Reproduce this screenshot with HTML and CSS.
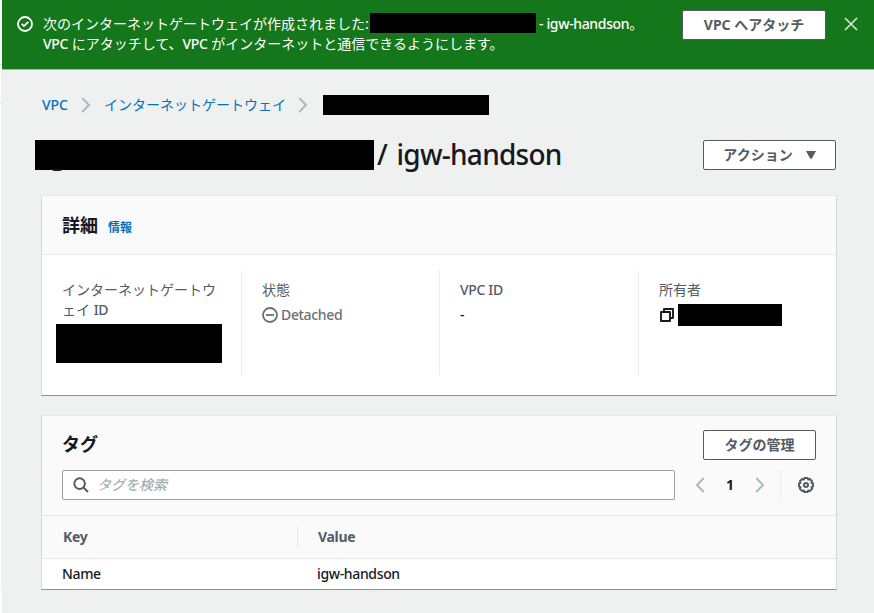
FILE: index.html
```html
<!DOCTYPE html>
<html lang="ja">
<head>
<meta charset="utf-8">
<title>igw-handson</title>
<link rel="stylesheet" href="styles.css">
</head>
<body>
<div class="app">
<aside class="rail"><i></i><i></i></aside>
<main class="main">
  <div class="flash">
    <svg class="flash-icon" width="16" height="16" viewBox="0 0 16 16" fill="none" stroke="currentColor" stroke-width="1.8"><circle cx="8" cy="8" r="7"/><path d="M4.7 7.8l2.3 2.3 4.3-4.2"/></svg>
    <div class="flash-text">
      <div class="line"><span class="msg1">次のインターネットゲートウェイが作成されました:</span><span class="mask mask-flash"></span><span class="latin">- igw-handson</span>。</div>
      <div class="line"><span><span class="latin">VPC</span> にアタッチして、<span class="latin">VPC</span> がインターネットと通信できるようにします。</span></div>
    </div>
    <button class="btn btn-attach">VPC へアタッチ</button>
    <svg class="close" width="16" height="16" viewBox="0 0 16 16" fill="none" stroke="currentColor" stroke-width="1.6"><path d="M2 2l12 12M14 2L2 14"/></svg>
  </div>
  <div class="content">
    <nav class="crumbs">
      <a class="vpc">VPC</a>
      <svg width="10" height="16" viewBox="0 0 10 16" fill="none" stroke="currentColor" stroke-width="1.9"><path d="M1.3 1.2L8 8l-6.7 6.8"/></svg>
      <a class="parent">インターネットゲートウェイ</a>
      <svg width="10" height="16" viewBox="0 0 10 16" fill="none" stroke="currentColor" stroke-width="1.9"><path d="M1.3 1.2L8 8l-6.7 6.8"/></svg>
      <span class="mask mask-crumb"></span>
    </nav>
    <header class="title">
      <span class="mask mask-title"></span>
      <h1>/ igw-handson</h1>
      <button class="btn btn-action">アクション<svg width="10" height="8" viewBox="0 0 10 8"><path d="M0 0h10L6 7.3Q5 8.5 4 7.3z" fill="currentColor"/></svg></button>
    </header>
    <section class="card details">
      <div class="card-head"><h2>詳細</h2><a class="info">情報</a></div>
      <div class="cols">
        <div class="col"><div class="label">インターネットゲートウェイ <span class="latin">ID</span></div><span class="mask mask-id"></span></div>
        <div class="col"><div class="label">状態</div>
          <div class="value status"><svg width="16" height="16" viewBox="0 0 16 16" fill="none" stroke="currentColor" stroke-width="1.8"><circle cx="8" cy="8" r="7"/><path d="M4 8h8"/></svg><span class="latin">Detached</span></div></div>
        <div class="col"><div class="label"><span class="latin">VPC ID</span></div><div class="value"><span class="latin">-</span></div></div>
        <div class="col"><div class="label">所有者</div>
          <div class="value owner"><svg width="16" height="16" viewBox="0 0 16 16" fill="none" stroke="currentColor" stroke-width="1.9" stroke-linejoin="round"><path d="M2 5h9v9H2z"/><path d="M5 5V2h9v9h-3"/></svg><span class="mask mask-owner"></span></div></div>
      </div>
    </section>
    <section class="card tags">
      <div class="tags-head"><h2>タグ</h2><button class="btn btn-tags">タグの管理</button></div>
      <div class="tools">
        <div class="search"><svg width="16" height="16" viewBox="0 0 16 16" fill="none" stroke="currentColor" stroke-width="2"><circle cx="6.6" cy="6.6" r="5.3"/><path d="M10.4 10.4L15 15"/></svg><span>タグを検索</span></div>
        <svg class="chev" width="10" height="16" viewBox="0 0 10 16" fill="none" stroke="currentColor" stroke-width="1.9"><path d="M8.7 1L2 8l6.7 7"/></svg>
        <b>1</b>
        <svg class="chev" width="10" height="16" viewBox="0 0 10 16" fill="none" stroke="currentColor" stroke-width="1.9"><path d="M1.3 1L8 8l-6.7 7"/></svg>
        <div class="gear"><svg width="16" height="16" viewBox="0 0 16 16" fill="none" stroke="currentColor" stroke-width="2" stroke-linejoin="round"><path d="M6.5 1H9.5L10.2 2.5L11.8 1.9L14.1 4.2L13.5 5.8L15 6.5V9.5L13.5 10.2L14.1 11.8L11.8 14.1L10.2 13.5L9.5 15H6.5L5.8 13.5L4.2 14.1L1.9 11.8L2.5 10.2L1 9.5V6.5L2.5 5.8L1.9 4.2L4.2 1.9L5.8 2.5z"/><circle cx="8" cy="8" r="2"/></svg></div>
      </div>
      <div class="row th"><span>Key</span><span>Value</span></div>
      <div class="row td"><span>Name</span><span>igw-handson</span></div>
    </section>
  </div>
</main>
</div>
</body>
</html>
```
FILE: styles.css
```css
* { box-sizing: border-box; }
body {
  margin: 0;
  background: #fff;
  color: #16191f;
  font: 400 14px/20px "Noto Sans", "Noto Sans CJK JP", sans-serif;
}
svg { display: block; flex: none; }
h1, h2 { margin: 0; }
.app { display: flex; height: 613px; overflow: hidden; }
.rail { width: 2px; padding-top: 64px; }
.rail i { display: block; height: 1px; margin-bottom: 38px; background: #d5dbdb; }
.main { flex: 1; min-width: 0; background: #eff1f1; }
.mask { display: block; flex: none; background: #000; }
.latin { font-weight: 500; letter-spacing: -.35px; }

.flash {
  display: flex;
  align-items: flex-start;
  height: 70px;
  padding: 10px 15px 0;
  border-bottom: 1px solid #a9b3b5;
  background: #15771b;
  color: #fff;
}
.flash-icon { margin-top: 6px; }
.flash-text { flex: 1; padding: 4px 0 0 10px; }
.line { display: flex; height: 20px; white-space: nowrap; align-items: center; }
.msg1 { width: 325px; }
.mask-flash { width: 166px; height: 20px; margin: -2px 3px 0 2px; }
.btn {
  display: flex;
  align-items: center;
  justify-content: center;
  height: 30px;
  padding: 0 0 1px;
  border: 1px solid #545b64;
  border-radius: 2px;
  background: #fff;
  color: #545b64;
  font: bold 14px/20px "Noto Sans", "Noto Sans CJK JP", sans-serif;
  white-space: nowrap;
}
.btn-attach { width: 144px; }
.close { margin: 6px 0 0 17px; color: #d9ead9; }

.content { margin-left: -1px; padding: 24px 37px 0 40px; background: #eff1f1; }
.crumbs { display: flex; align-items: center; height: 21px; padding-left: 1px; color: #0073bb; white-space: nowrap; }
.crumbs svg { margin: 0 13px; color: #aab7b8; }
.vpc { width: 26px; font-weight: 500; letter-spacing: -.1px; }
.parent { width: 181px; }
.mask-crumb { width: 166px; height: 20px; margin-left: 2px; }
.title { display: flex; align-items: center; height: 30px; margin-top: 25px; padding-right: 1px; }
.mask-title { position: relative; width: 339px; height: 30px; margin: 0 3px 0 -6px; }
.mask-title::after { content: ""; position: absolute; left: 17px; top: 29px; width: 10px; height: 2px; border-radius: 0 0 5px 5px; background: #16191f; }
h1 { flex: 1; margin-top: -2px; font-size: 28px; line-height: 30px; font-weight: 500; letter-spacing: -.75px; word-spacing: 3px; white-space: nowrap; }
.btn-action { width: 133px; }
.btn-action svg { margin-left: 13px; }

.card {
  margin-top: 25px;
  border: 1px solid #d5dbdb;
  border-top-color: #e6e9e9;
  border-bottom-color: #879596;
  background: #fff;
}
h2 { font-size: 18px; line-height: 24px; font-weight: 700; }
.details { height: 201px; }
.card-head { display: flex; align-items: center; height: 59px; padding-left: 20px; border-bottom: 1px solid #eaeded; background: #fafafa; }
.info { margin: 5px 0 0 10px; color: #0073bb; font-size: 12px; font-weight: 700; }
.cols { display: grid; grid-template-columns: 199px 198px 199px 1fr; height: 105px; margin-top: 15px; }
.col { padding: 10px 20px 0; }
.col + .col { border-left: 1px solid #eaeded; }
.col:first-child { padding-right: 18px; }
.label { color: #545b64; line-height: 20px; }
.value { height: 20px; margin-top: 5px; }
.status, .owner { display: flex; align-items: center; }
.status { gap: 3px; color: #687078; }
.mask-id { width: 166px; height: 39px; margin: 4px 0 0 -6px; }
.mask-owner { width: 104px; height: 22px; margin-left: 3px; }

.tags { height: 175px; margin-top: 19px; }
.tags-head { display: flex; align-items: center; justify-content: space-between; height: 54px; padding: 4px 20px 0; background: #fafafa; }
.tags-head h2 { margin-top: -2px; }
.btn-tags { width: 113px; }
.tools { display: flex; align-items: center; height: 45px; padding: 0 20px 15px; background: #fafafa; }
.search { display: flex; align-items: center; gap: 8px; width: 613px; height: 30px; padding-left: 10px; border: 1px solid #95a5a6; border-radius: 2px; background: #fff; color: #545b64; }
.search span { color: #95a5a6; font-style: italic; }
.chev { margin: 0 20px; color: #aab7b8; }
.tools b { width: 10px; text-align: center; }
.gear { display: flex; align-items: center; height: 30px; margin-left: -5px; padding-left: 17px; border-left: 1px solid #eaeded; color: #545b64; }
.row { display: flex; align-items: center; border-top: 1px solid #e4e8e8; font-weight: 500; letter-spacing: -.35px; }
.row span:first-child { width: 255px; padding-left: 20px; }
.row span:last-child { padding-left: 20px; }
.th { height: 43px; background: #fafafa; color: #545b64; font-weight: 700; letter-spacing: -.3px; }
.th span:first-child { border-right: 1px solid #e4e8e8; width: 256px; padding-left: 21px; }
.td { height: 31px; }
```
